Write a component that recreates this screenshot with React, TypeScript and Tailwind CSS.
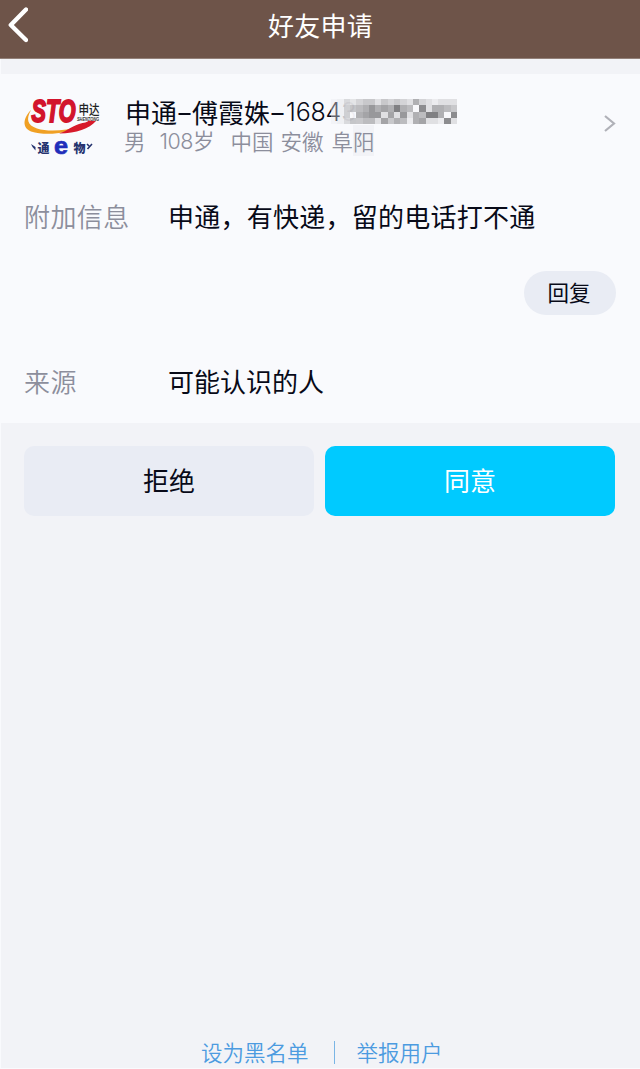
import React, { useState } from "react";

interface MosaicProps {
  rows: string[];
}

// One hex digit per cell, from 0 (clear) to f (darkest)
const phoneMosaic: string[] = [
  "12323442434326321222",
  "1245568676a650926654",
  "124067882728265aa609",
  "12354552746516722192",
];

const Mosaic: React.FC<MosaicProps> = ({ rows }) => (
  <svg
    className="absolute left-[206px] top-[-1px] h-[25px] w-[126px]"
    viewBox="0 0 20 4"
    preserveAspectRatio="none"
    shapeRendering="crispEdges"
  >
    {rows.map((row, y) =>
      row.split("").map((cell, x) => {
        const shade = 248 - parseInt(cell, 16) * 12;
        return (
          <rect
            key={`${x}-${y}`}
            x={x}
            y={y}
            width="1"
            height="1"
            fill={`rgb(${shade},${shade},${shade + 3})`}
            opacity={x < 2 ? 0.4 : x < 4 ? 0.85 : 1}
          />
        );
      })
    )}
  </svg>
);

const Logo: React.FC = () => (
  <svg className="h-[76px] w-[76px] shrink-0 overflow-visible" viewBox="24 86 76 76">
    <path
      d="M31 110C24 117 21 127 31 131.5C45 136 68 134 80 126C66 131 48 132 37 128.5C27 125 26 119 31 110Z"
      fill="#f0a024"
    />
    <path d="M59 133.5C67 131 70 127 79 124C84 122.5 88 122.5 88 120.5L96 121C89 129 77 133 59 133.5Z" fill="#d71a2b" />
    <text
      x="31.5"
      y="121.5"
      textLength="44"
      lengthAdjust="spacingAndGlyphs"
      fill="#d2142c"
      stroke="#d2142c"
      strokeWidth="1.9"
      className="font-['Liberation_Sans',sans-serif] text-[31px] font-bold italic"
    >
      STO
    </text>
    <text
      x="78.5"
      y="113.5"
      textLength="21"
      lengthAdjust="spacingAndGlyphs"
      fill="#222"
      className="font-['Noto_Sans_CJK_SC',sans-serif] text-[13px] font-medium"
    >
      申达
    </text>
    <text
      x="77"
      y="121"
      textLength="22"
      lengthAdjust="spacingAndGlyphs"
      fill="#333"
      className="font-['Liberation_Sans',sans-serif] text-[5px] font-bold italic"
    >
      SHENTONG
    </text>
    <path d="M31 144L35.5 147L35.5 150.5L32.5 147Z" fill="#25336f" />
    <text x="37.5" y="153" fill="#25336f" className="font-['Noto_Sans_CJK_SC',sans-serif] text-[12px] font-black">
      通
    </text>
    <text
      x="54"
      y="153.5"
      textLength="14"
      lengthAdjust="spacingAndGlyphs"
      fill="#202eba"
      stroke="#202eba"
      strokeWidth="0.7"
      className="font-['Liberation_Sans',sans-serif] text-[24px] font-bold"
    >
      e
    </text>
    <text x="73.5" y="153" fill="#25336f" className="font-['Noto_Sans_CJK_SC',sans-serif] text-[12px] font-black">
      物
    </text>
    <path d="M87 144L89 146M92 144L87.5 149" stroke="#25336f" strokeWidth="1.6" />
  </svg>
);

const App: React.FC = () => {
  const [accepted, setAccepted] = useState(false);

  return (
    <div className="flex h-[1069px] w-[640px] flex-col overflow-hidden bg-[#f2f3f7] font-['Noto_Sans_CJK_SC',sans-serif] text-[26px] leading-[38px] text-[#080a18]">
      {/* Header */}
      <header className="grid h-[59px] shrink-0 grid-cols-[60px_1fr_60px] border-b border-[#928078] bg-[#6e5449] pb-2 text-white">
        <button className="pb-px pl-2 pt-px" aria-label="返回">
          <svg className="h-9 w-5" viewBox="0 0 20 36" fill="none" stroke="currentColor" strokeWidth="4.4">
            <path d="M18 2.5L2.8 18L18 33" strokeLinecap="round" strokeLinejoin="round" />
          </svg>
        </button>
        <h1 className="pl-px pt-[6px] text-center tracking-[0.2px]">好友申请</h1>
      </header>

      <div className="flex flex-1 flex-col border-b border-l border-[#f9fafd]">
        {/* Request details */}
        <main className="mt-[15px] h-[349px] shrink-0 bg-[#f9fafd] pl-[23px] pr-6">
          <section className="flex h-[100px] pt-3">
            <Logo />
            <div className="relative ml-[25px] mt-[14px] flex-1 whitespace-nowrap leading-none">
              <h2 className="flex h-6 items-center">
                申通
                <span className="flex w-[15px] justify-center pt-0.5 font-[Inter,sans-serif] text-[24px]">–</span>
                傅霞姝
                <span className="flex w-[15px] justify-center pt-0.5 font-[Inter,sans-serif] text-[24px]">–</span>
                <span className="ml-px font-[Inter,sans-serif] text-[25px] font-light tracking-[-0.2px]">
                  1684<span className="text-[#b0b1b8]">3</span>
                </span>
              </h2>
              <Mosaic rows={phoneMosaic} />
              <p className="mt-1 flex h-[26px] items-center text-[21.5px] font-[350] text-[#8c8e9c]">
                <span className="-ml-px">男</span>
                <span className="ml-[14px]">
                  <span className="font-[Inter,sans-serif] font-light tracking-[-0.5px]">108</span>岁
                </span>
                <span className="ml-4">中国</span>
                <span className="ml-[7px]">安徽</span>
                <span className="ml-2">
                  阜<span className="bg-[#eff0f3]/70">阳</span>
                </span>
              </p>
            </div>
            <svg className="mt-[29px] h-[17px] w-3" viewBox="0 0 12 17" fill="none" stroke="#b0b1b8" strokeWidth="2.2">
              <path d="M1 1L10 8.5L1 16" />
            </svg>
          </section>
          <section className="flex h-[97px] pt-[23px]">
            <span className="w-36 font-[350] tracking-[0.4px] text-[#8c8e9c]">附加信息</span>
            <p className="tracking-[0.25px]">申通，有快递，留的电话打不通</p>
          </section>
          <div className="flex justify-end">
            <button className="h-[44px] w-[92px] rounded-full bg-[#e9ecf4] pb-0.5 pr-0.5 text-[21.5px]">回复</button>
          </div>
          <section className="flex pt-[47px]">
            <span className="w-36 font-[350] tracking-[0.4px] text-[#8c8e9c]">来源</span>
            <p>可能认识的人</p>
          </section>
        </main>

        {/* Actions */}
        <div className="mt-[23px] grid h-[70px] shrink-0 grid-cols-2 gap-[11px] pl-[23px] pr-[25px]">
          <button className="rounded-[10px] bg-[#e9ecf4] pb-0.5" onClick={() => setAccepted(false)}>
            拒绝
          </button>
          <button
            className="rounded-[10px] bg-[#00caff] pb-0.5 text-white"
            aria-pressed={accepted}
            onClick={() => setAccepted(true)}
          >
            同意
          </button>
        </div>

        <footer className="mt-auto flex h-8 items-center pl-[200px] text-[21.5px] font-[350] leading-8 text-[#4c9be0]">
          <button>设为黑名单</button>
          <span className="ml-[25px] h-[23px] w-px bg-[#7ab5e5]" />
          <button className="ml-[22px]">举报用户</button>
        </footer>
      </div>
    </div>
  );
};

export default App;
